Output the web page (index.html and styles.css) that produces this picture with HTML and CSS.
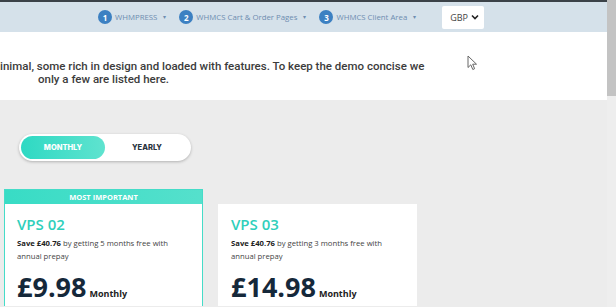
FILE: index.html
```html
<!DOCTYPE html>
<html lang="en">

<head>
    <meta charset="UTF-8">
    <meta name="viewport" content="width=device-width, initial-scale=1.0">
    <title>WHMCS Templates - Pricing</title>
    <link rel="stylesheet" href="styles.css">
</head>

<body>
    <div class="screen">
        <div class="page">
            <div class="topline"></div>
            <nav class="nav">
                <a class="nav-item" href="#"><span class="num">1</span>WHMPRESS<span class="caret">&#9662;</span></a>
                <a class="nav-item" href="#"><span class="num">2</span>WHMCS Cart &amp; Order Pages<span class="caret">&#9662;</span></a>
                <a class="nav-item" href="#"><span class="num">3</span>WHMCS Client Area<span class="caret">&#9662;</span></a>
                <div class="currency">
                    <span>GBP</span>
                    <svg width="8" height="6" viewBox="0 0 8 6"><path d="M1 1.5 L4 4.5 L7 1.5" fill="none" stroke="#222" stroke-width="1.6"/></svg>
                </div>
            </nav>

            <section class="intro">
                <p class="line1">inimal, some rich in design and loaded with features. To keep the demo concise we</p>
                <p class="line2">only a few are listed here.</p>
            </section>

            <section class="pricing">
                <div class="toggle">
                    <span class="toggle-btn active">MONTHLY</span>
                    <span class="toggle-btn">YEARLY</span>
                </div>

                <div class="plans">
                    <div class="plan featured">
                        <div class="plan-badge">MOST IMPORTANT</div>
                        <div class="plan-body">
                            <h3>VPS 02</h3>
                            <p class="save"><b>Save £40.76</b> by getting 5 months free with annual prepay</p>
                            <div class="price">£9.98<span>Monthly</span></div>
                        </div>
                    </div>
                    <div class="plan">
                        <div class="plan-body">
                            <h3>VPS 03</h3>
                            <p class="save"><b>Save £40.76</b> by getting 3 months free with annual prepay</p>
                            <div class="price">£14.98<span>Monthly</span></div>
                        </div>
                    </div>
                </div>
            </section>
        </div>
        <div class="scrollbar"><div class="thumb"></div></div>
    </div>

    <!-- mouse pointer -->
    <svg class="cursor" width="11" height="16" viewBox="0 0 11 16">
        <path d="M1 1 L1 12.5 L3.8 9.8 L5.8 14.5 L7.6 13.7 L5.7 9.2 L9.5 9.2 Z" fill="#fff" stroke="#666" stroke-width="1"/>
    </svg>
</body>

</html>
```

FILE: styles.css
```css
body {
    margin: 0;
    height: 307px;
    overflow: hidden;
    background-color: #ececec;
    font-family: 'Open Sans', sans-serif;
}

.screen {
    display: flex;
    height: 307px;
}

.page {
    flex: 1;
    overflow: hidden;
}

.scrollbar {
    width: 9px;
    background-color: #eeeeee;
}

.scrollbar .thumb {
    height: 96px;
    background-color: #c3c3c3;
}

.topline {
    height: 2px;
    background-color: #3b4248;
}

.nav {
    display: flex;
    align-items: center;
    height: 30px;
    padding-left: 98px;
    background-color: #d5e1ea;
}

.nav-item {
    display: flex;
    align-items: center;
    margin-right: 13px;
    font-size: 7.8px;
    color: #6e8db0;
    text-decoration: none;
}

.nav-item .num {
    display: flex;
    align-items: center;
    justify-content: center;
    width: 14px;
    height: 14px;
    margin-right: 3px;
    border-radius: 50%;
    background-color: #3c80c2;
    color: white;
    font-size: 8px;
    font-weight: bold;
}

.nav-item .caret {
    margin-left: 6px;
    font-size: 6px;
}

.currency {
    display: flex;
    align-items: center;
    justify-content: space-between;
    width: 29px;
    height: 23px;
    margin-left: 13px;
    padding: 0 5px 0 8px;
    border-radius: 2px;
    background-color: white;
    font-size: 9px;
    color: #444;
}

.intro {
    height: 67px;
    padding-top: 1px;
    background-color: white;
    font-family: 'Roboto', sans-serif;
    font-size: 11.5px;
    font-weight: 500;
    color: #3c3c3c;
}

.intro p {
    margin: 0;
    line-height: 13px;
}

.intro .line1 {
    margin-top: 27px;
}

.intro .line2 {
    padding-left: 38px;
}

.pricing {
    padding: 34px 0 0 4px;
}

.toggle {
    display: flex;
    width: 168px;
    height: 23px;
    margin-left: 15px;
    padding: 2px;
    border-radius: 14px;
    background-color: white;
    box-shadow: 0 1px 3px rgba(0, 0, 0, 0.25);
}

.toggle-btn {
    display: flex;
    align-items: center;
    justify-content: center;
    flex: 1;
    border-radius: 12px;
    font-family: 'Inter', sans-serif;
    font-size: 7.5px;
    font-weight: 800;
    color: #2a3440;
}

.toggle-btn.active {
    flex: 0 0 84px;
    background: linear-gradient(90deg, #2ed9c3, #5fe3cf);
    color: white;
}

.plans {
    display: flex;
    gap: 15px;
    margin-top: 28px;
}

.plan {
    width: 199px;
    margin-top: 15px;
    background-color: white;
}

.plan.featured {
    width: 197px;
    margin-top: 0;
    border: 1px solid #45dcc8;
    border-bottom: none;
}

.plan-badge {
    height: 14px;
    background: linear-gradient(90deg, #38dcc5, #55e0cc);
    color: white;
    font-size: 7.5px;
    font-weight: bold;
    text-align: center;
    line-height: 14px;
}

.plan-body {
    padding: 10px 13px 0 13px;
}

.plan.featured .plan-body {
    padding-left: 12px;
}

.plan h3 {
    margin: 0;
    font-size: 15px;
    font-weight: 600;
    line-height: 20px;
    color: #2fcfbb;
}

.save {
    margin: 3px 0 0;
    font-size: 7.7px;
    line-height: 13px;
    color: #444;
}

.save b {
    color: #222;
}

.price {
    margin-top: 12px;
    font-size: 27px;
    font-weight: bold;
    line-height: 24px;
    color: #15283a;
}

.price span {
    margin-left: 3px;
    font-size: 9px;
    color: #222;
}

.cursor {
    position: absolute;
    left: 467px;
    top: 55px;
}
```
